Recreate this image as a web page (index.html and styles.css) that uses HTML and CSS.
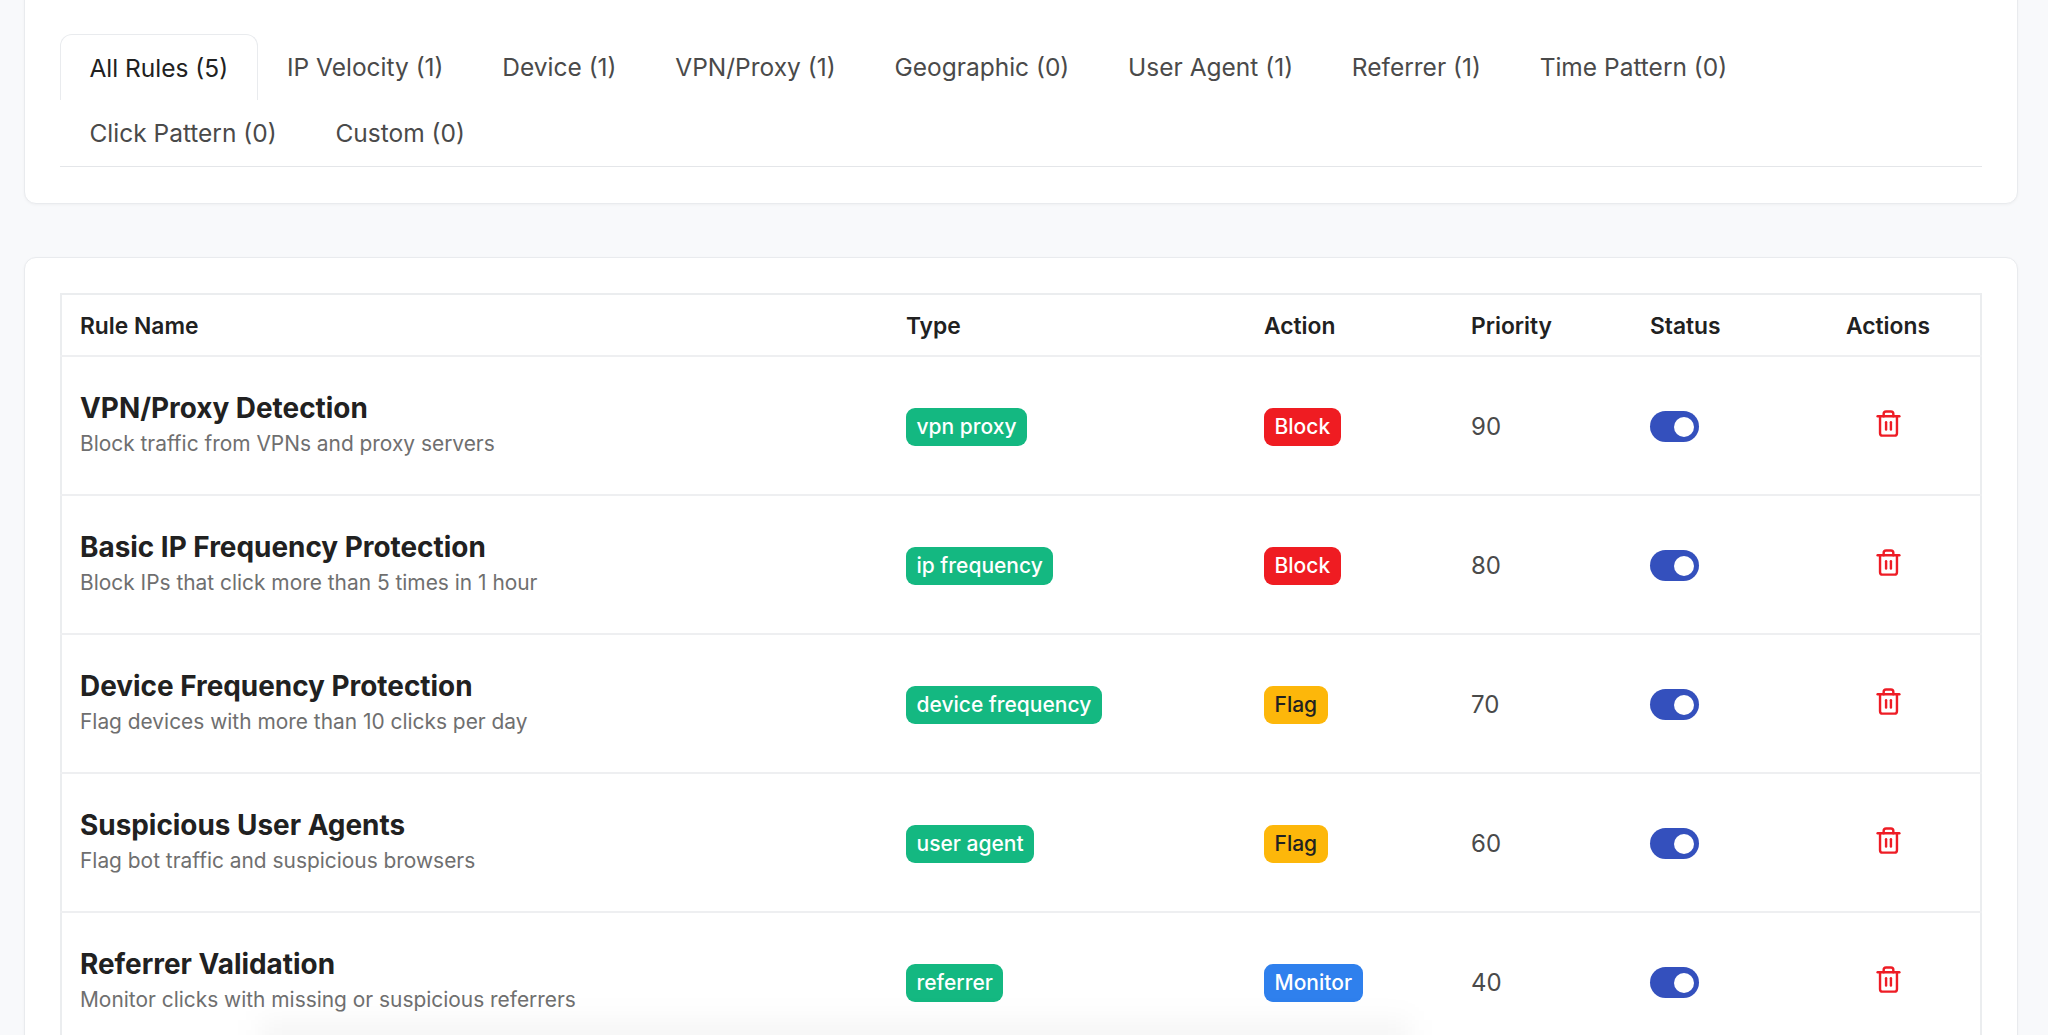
FILE: index.html
```html
<!DOCTYPE html>
<html lang="en">
<head>
    <meta charset="UTF-8">
    <meta name="viewport" content="width=device-width, initial-scale=1.0">
    <link rel="stylesheet" href="styles.css">
    <title>Fraud Rules</title>
</head>
<body>

    <div class="card tabs-card">
        <div class="tabs">
            <a class="tab active">All Rules (5)</a>
            <a class="tab">IP Velocity (1)</a>
            <a class="tab">Device (1)</a>
            <a class="tab">VPN/Proxy (1)</a>
            <a class="tab">Geographic (0)</a>
            <a class="tab">User Agent (1)</a>
            <a class="tab">Referrer (1)</a>
            <a class="tab">Time Pattern (0)</a>
            <a class="tab">Click Pattern (0)</a>
            <a class="tab">Custom (0)</a>
        </div>
    </div>

    <div class="card table-card">
        <table class="rules">
            <colgroup>
                <col class="col-name">
                <col class="col-type">
                <col class="col-action">
                <col class="col-priority">
                <col class="col-status">
                <col class="col-actions">
            </colgroup>
            <thead>
                <tr>
                    <th>Rule Name</th>
                    <th>Type</th>
                    <th>Action</th>
                    <th>Priority</th>
                    <th>Status</th>
                    <th class="center">Actions</th>
                </tr>
            </thead>
            <tbody>
                <tr>
                    <td>
                        <div class="rule-name">VPN/Proxy Detection</div>
                        <div class="rule-desc">Block traffic from VPNs and proxy servers</div>
                    </td>
                    <td><span class="badge green">vpn proxy</span></td>
                    <td><span class="badge red">Block</span></td>
                    <td class="priority">90</td>
                    <td><span class="toggle"><span class="knob"></span></span></td>
                    <td class="center"><svg class="trash" viewBox="0 0 24 24"><use href="#trash"></use></svg></td>
                </tr>
                <tr>
                    <td>
                        <div class="rule-name">Basic IP Frequency Protection</div>
                        <div class="rule-desc">Block IPs that click more than 5 times in 1 hour</div>
                    </td>
                    <td><span class="badge green">ip frequency</span></td>
                    <td><span class="badge red">Block</span></td>
                    <td class="priority">80</td>
                    <td><span class="toggle"><span class="knob"></span></span></td>
                    <td class="center"><svg class="trash" viewBox="0 0 24 24"><use href="#trash"></use></svg></td>
                </tr>
                <tr>
                    <td>
                        <div class="rule-name">Device Frequency Protection</div>
                        <div class="rule-desc">Flag devices with more than 10 clicks per day</div>
                    </td>
                    <td><span class="badge green">device frequency</span></td>
                    <td><span class="badge yellow">Flag</span></td>
                    <td class="priority">70</td>
                    <td><span class="toggle"><span class="knob"></span></span></td>
                    <td class="center"><svg class="trash" viewBox="0 0 24 24"><use href="#trash"></use></svg></td>
                </tr>
                <tr>
                    <td>
                        <div class="rule-name">Suspicious User Agents</div>
                        <div class="rule-desc">Flag bot traffic and suspicious browsers</div>
                    </td>
                    <td><span class="badge green">user agent</span></td>
                    <td><span class="badge yellow">Flag</span></td>
                    <td class="priority">60</td>
                    <td><span class="toggle"><span class="knob"></span></span></td>
                    <td class="center"><svg class="trash" viewBox="0 0 24 24"><use href="#trash"></use></svg></td>
                </tr>
                <tr>
                    <td>
                        <div class="rule-name">Referrer Validation</div>
                        <div class="rule-desc">Monitor clicks with missing or suspicious referrers</div>
                    </td>
                    <td><span class="badge green">referrer</span></td>
                    <td><span class="badge blue">Monitor</span></td>
                    <td class="priority">40</td>
                    <td><span class="toggle"><span class="knob"></span></span></td>
                    <td class="center"><svg class="trash" viewBox="0 0 24 24"><use href="#trash"></use></svg></td>
                </tr>
            </tbody>
        </table>
    </div>

    <!-- soft shadow that sits over the bottom edge of the page -->
    <div class="bottom-fade"></div>

    <svg class="icon-defs" aria-hidden="true">
        <symbol id="trash" viewBox="0 0 24 24">
            <path d="M3 6h18"></path>
            <path d="M19 6v14a2 2 0 0 1-2 2H7a2 2 0 0 1-2-2V6"></path>
            <path d="M8 6V4a2 2 0 0 1 2-2h4a2 2 0 0 1 2 2v2"></path>
            <path d="M10 11v6"></path>
            <path d="M14 11v6"></path>
        </symbol>
    </svg>

</body>
</html>
```

FILE: styles.css
```css
html, body {
    height: 1035px;
    overflow: hidden;
}

body {
    font-family: 'Inter', sans-serif;
    margin: 0;
    padding: 0 30px 0 24px;
    background-color: #f8f9fb;
    color: #212121;
    position: relative;
}

.card {
    background-color: #fff;
    border: 1px solid #e9ebee;
    border-radius: 12px;
    box-shadow: 0 1px 3px rgba(0, 0, 0, 0.04);
    padding: 0 35px;
}

.tabs-card {
    margin-top: -12px;
    padding-top: 45px;
    padding-bottom: 36px;
}

.table-card {
    margin-top: 53px;
    padding-top: 35px;
}

.tabs {
    display: flex;
    flex-wrap: wrap;
    border-bottom: 1px solid #e4e6e9;
}

.tab {
    height: 66px;
    box-sizing: border-box;
    padding: 0 28.4px;
    display: flex;
    align-items: center;
    font-size: 24.5px;
    color: #4a4a4a;
    border: 1px solid transparent;
    border-radius: 12px 12px 0 0;
}

.tab.active {
    color: #212121;
    border-color: #e9ebee;
    border-bottom: none;
}

.rules {
    width: 100%;
    table-layout: fixed;
    border-collapse: collapse;
    border: 2px solid #ebedef;
}

.col-name { width: 827px; }
.col-type { width: 358px; }
.col-action { width: 207px; }
.col-priority { width: 179px; }
.col-status { width: 164px; }

.rules th {
    height: 60px;
    padding: 0 18px;
    text-align: left;
    font-size: 22.8px;
    font-weight: 600;
    border-bottom: 2px solid #eeeff1;
}

.rules td {
    height: 133.9px;
    padding: 3px 18px 0;
    border-bottom: 2px solid #eeeff1;
}

.rules .center {
    text-align: center;
}

.rule-name {
    font-size: 27.9px;
    font-weight: 700;
    line-height: 36px;
    margin-bottom: 3px;
}

.rule-desc {
    font-size: 20.9px;
    line-height: 30px;
    color: #6f6f6f;
    margin-bottom: 5px;
}

.badge {
    display: inline-block;
    padding: 0 10.5px;
    line-height: 38px;
    border-radius: 9px;
    font-size: 21px;
    font-weight: 500;
    color: #fff;
}

.green { background-color: #14b881; }
.red { background-color: #ef1c22; }
.yellow { background-color: #fdb70a; color: #212121; }
.blue { background-color: #2f80ed; }

.priority {
    font-size: 24px;
    color: #4a4a4a;
}

.toggle {
    display: flex;
    justify-content: flex-end;
    align-items: center;
    width: 49px;
    height: 31px;
    padding-right: 5px;
    box-sizing: border-box;
    border-radius: 16px;
    background-color: #3450bd;
}

.knob {
    width: 20px;
    height: 20px;
    border-radius: 50%;
    background-color: #fff;
}

.trash {
    width: 29px;
    height: 29px;
    fill: none;
    stroke: #ee1c25;
    stroke-width: 2;
    stroke-linecap: round;
    stroke-linejoin: round;
    margin-bottom: 3px;
}

.bottom-fade {
    position: absolute;
    left: 260px;
    top: 1020px;
    width: 1150px;
    height: 40px;
    background-color: rgba(0, 0, 0, 0.04);
    filter: blur(14px);
}

.icon-defs {
    position: absolute;
    width: 0;
    height: 0;
}
```
